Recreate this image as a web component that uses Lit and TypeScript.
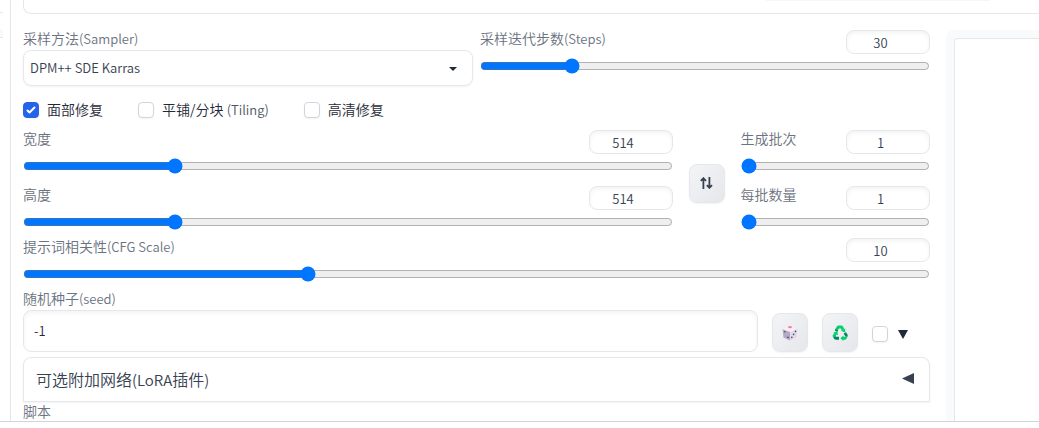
import { LitElement, html, css, svg } from "lit";
import { customElement, property } from "lit/decorators.js";

@customElement("range-field")
class RangeField extends LitElement {
  @property() label = "";
  @property() note = "";
  @property({ type: Number }) value = 0;
  @property({ type: Number }) min = 0;
  @property({ type: Number }) max = 100;

  static styles = css`
    :host { display: block; min-width: 0; }
    .head { display: flex; justify-content: space-between; align-items: flex-start; height: 24px; }
    .label { font-size: 14px; line-height: 16px; color: #6b7280; white-space: nowrap; }
    .note { font-size: 13px; }
    .number {
      box-sizing: border-box; width: 84px; height: 24px; margin: 0; padding: 0 8px;
      border: 1px solid #e5e7eb; border-radius: 8px; background: #fff;
      box-shadow: inset 0 2px 4px rgba(0, 0, 0, 0.05);
      font: inherit; font-size: 13px; text-align: center; color: #374151; outline: none;
    }
    .number::-webkit-inner-spin-button { opacity: 0; }
    .slider { display: block; box-sizing: border-box; width: 100%; height: 16px; margin: 4px 0 0; }
  `;

  private update_(e: Event) {
    this.value = Number((e.target as HTMLInputElement).value);
  }

  render() {
    return html`
      <div class="head">
        <label class="label" for="slider">${this.label}<span class="note">${this.note}</span></label>
        <input class="number" type="number" aria-label=${this.label}
          min=${this.min} max=${this.max} .value=${String(this.value)} @change=${this.update_} />
      </div>
      <input id="slider" class="slider" type="range"
        min=${this.min} max=${this.max} .value=${String(this.value)} @input=${this.update_} />
    `;
  }
}

const dice = svg`
  <path d="M8 1 L15 4 L8 7 L1 4Z" fill="#f5eef8"/>
  <path d="M0.6 4.2 L8 7 V15.6 L1.5 12.6Z" fill="#b4a8c2"/>
  <path d="M15.4 4.2 L8 7 V15.6 L14.5 12.6Z" fill="#e2d8ec"/>
  <ellipse cx="8" cy="2.2" rx="2" ry="1.1" fill="#f8808c"/>
  <g fill="#54406e"><circle cx="2.7" cy="6.8" r="0.8"/><circle cx="6" cy="12.4" r="0.8"/>
  <circle cx="13.5" cy="6.4" r="0.8"/><circle cx="11.6" cy="9.4" r="0.8"/><circle cx="9.8" cy="12.4" r="0.8"/></g>`;

const recycle = svg`
  <path d="M4.6 4.8 L6.2 2 H9.6 L11 4.6" fill="none" stroke="#00d26a" stroke-width="2.8" stroke-linejoin="round"/>
  <path d="M3.4 3.8 L6.2 5.6 L5.2 7 L2.8 5.6Z" fill="#008463"/>
  <path d="M8.8 5.8 L13.2 3.4 V7.6Z" fill="#00d26a"/>
  <path d="M3.6 8.4 L2 11 L3 12.4" fill="none" stroke="#00d26a" stroke-width="2.8" stroke-linejoin="round"/>
  <path d="M1.2 7.6 L5.4 6.6 L6 10.2Z" fill="#00d26a"/>
  <path d="M1.4 12.4 Q2.2 14.8 4 14.8 H7 V11.8 H3Z" fill="#008463"/>
  <path d="M11.6 8.6 L14 7.2 L15.6 9.8 Q16 11 15.2 12 L13.4 11.6Z" fill="#008463"/>
  <path d="M15.2 11.6 Q14.8 14.8 12.6 14.8 H11.4 V15.9 L8.4 13.2 L11.4 10.4 V11.8 H13Z" fill="#00d26a"/>`;

@customElement("app-root")
class AppRoot extends LitElement {
  static styles = css`
    :host {
      display: block; background: #fff; overflow: hidden; font-weight: 350;
      font-family: "Noto Sans CJK SC", "Noto Sans", sans-serif; color: #1f2937;
    }
    .page { display: flex; border-bottom: 1px solid #d4d4d8; }
    .rail { width: 3px; margin-right: 7px; flex: none; }
    .rail-line { height: 12px; border-bottom: 1px solid #e5e7eb; }
    .rail-tab { height: 8px; margin-top: 16px; background: #f9fafb; border-bottom: 1px solid #e5e7eb; }
    .main { flex: 1; min-width: 0; border-left: 1px solid #e5e7eb; padding-left: 12px; }
    .prompt {
      height: 13px; border: 1px solid #e5e7eb; border-width: 0 0 1px 1px;
      border-bottom-left-radius: 8px; display: flex; justify-content: flex-end;
    }
    .prompt-shade { width: 224px; height: 1px; margin-right: 49px; background: #f7f7f8; }
    .body { display: flex; gap: 16px; padding-top: 16px; }
    .settings { flex: 1; min-width: 0; padding-bottom: 2px; }
    .gallery {
      width: 93px; box-sizing: border-box; padding: 8px 0 0 8px; display: flex;
      background: #f9fafb; border-top-left-radius: 8px;
    }
    .canvas { flex: 1; background: #fff; border: 1px solid #e5e7eb; border-width: 1px 0 0 1px; border-top-left-radius: 4px; }
    .label { display: block; height: 16px; font-size: 14px; line-height: 16px; color: #6b7280; }
    .note { font-size: 13px; }
    .top { display: grid; grid-template-columns: 1fr 1fr; gap: 7px; }
    .select-wrap { position: relative; margin-top: 4px; }
    .select {
      appearance: none; display: block; box-sizing: border-box; width: 100%; height: 36px;
      padding: 0 32px 2px 6px; border: 1px solid #e5e7eb; border-radius: 8px; background: #fff;
      box-shadow: 0 1px 2px rgba(0, 0, 0, 0.05);
      font: inherit; font-size: 13px; color: #374151;
    }
    .caret { position: absolute; right: 16px; top: 17px; width: 8px; height: 4px; pointer-events: none; }
    .checks { display: flex; gap: 35px; margin-top: 14px; height: 20px; }
    .check { display: flex; align-items: center; gap: 8px; font-size: 14px; line-height: 20px; white-space: nowrap; }
    .check-text { padding-bottom: 2px; }
    .check .note { color: #4b5563; }
    .box {
      appearance: none; box-sizing: border-box; width: 16px; height: 16px; margin: 0; flex: none;
      border: 1px solid #d1d5db; border-radius: 4px; background: #fff;
      box-shadow: 0 1px 2px rgba(0, 0, 0, 0.05);
    }
    .box:checked {
      border-color: #2563eb;
      background: #2563eb url("data:image/svg+xml,%3Csvg viewBox='0 0 16 16' fill='white' xmlns='http://www.w3.org/2000/svg'%3E%3Cpath d='M12.207 4.793a1 1 0 010 1.414l-5 5a1 1 0 01-1.414 0l-2-2a1 1 0 011.414-1.414L6.5 9.086l4.293-4.293a1 1 0 011.414 0z'/%3E%3C/svg%3E") center / 16px 16px;
    }
    .dims { display: grid; grid-template-columns: 24fr 36px 7fr; gap: 16px; margin-top: 10px; align-items: center; }
    .stack { display: grid; gap: 12px; min-width: 0; }
    .cfg { margin-top: 8px; }
    .tool {
      box-sizing: border-box; width: 36px; height: 39px; padding: 0; flex: none;
      display: flex; align-items: center; justify-content: center;
      border: 1px solid #e5e7eb; border-radius: 8px; color: #374151;
      background: linear-gradient(to bottom right, #f3f4f6, #e5e7eb);
      box-shadow: 0 1px 2px rgba(0, 0, 0, 0.05);
    }
    .swap { margin-top: 6px; }
    .seed-label { margin-top: 8px; }
    .seed-row { display: flex; align-items: flex-end; gap: 14px; margin-top: 4px; }
    .seed {
      flex: 1; min-width: 0; box-sizing: border-box; height: 42px; margin: 0; padding: 0 10px 2px;
      border: 1px solid #e5e7eb; border-radius: 8px; background: #fff; outline: none;
      box-shadow: inset 0 2px 4px rgba(0, 0, 0, 0.05);
      font: inherit; font-size: 13px; color: #1f2937;
    }
    .extra { display: flex; align-items: center; gap: 10px; height: 36px; padding-right: 22px; }
    .accordion {
      box-sizing: border-box; width: 100%; height: 45px; margin: 5px 0 1px; padding: 0 15px 2px 12px;
      display: flex; align-items: center; justify-content: space-between;
      border: 1px solid #e5e7eb; border-radius: 8px 8px 0 0; background: #fff;
      box-shadow: 0 1px 2px rgba(0, 0, 0, 0.05);
      font: inherit; font-size: 16px; color: #374151;
    }
    .latin { font-size: 15px; }
    svg { display: block; }
  `;

  render() {
    return html`
      <div class="page">
        <div class="rail"><div class="rail-line"></div><div class="rail-tab"></div></div>
        <main class="main">
          <div class="prompt"><div class="prompt-shade"></div></div>
          <div class="body">
            <section class="settings">
              <div class="top">
                <div>
                  <label class="label" for="sampler">采样方法<span class="note">(Sampler)</span></label>
                  <div class="select-wrap">
                    <select id="sampler" class="select"><option>DPM++ SDE Karras</option></select>
                    <svg class="caret" viewBox="0 0 8 4"><path d="M0 0H8L4 4Z" fill="#1f2937"/></svg>
                  </div>
                </div>
                <range-field label="采样迭代步数" note="(Steps)" .min=${1} .max=${150} .value=${30}></range-field>
              </div>
              <div class="checks">
                <label class="check"><input class="box" type="checkbox" checked /><span class="check-text">面部修复</span></label>
                <label class="check"><input class="box" type="checkbox" /><span class="check-text">平铺/分块 <span class="note">(Tiling)</span></span></label>
                <label class="check"><input class="box" type="checkbox" /><span class="check-text">高清修复</span></label>
              </div>
              <div class="dims">
                <div class="stack">
                  <range-field label="宽度" .min=${64} .max=${2048} .value=${514}></range-field>
                  <range-field label="高度" .min=${64} .max=${2048} .value=${514}></range-field>
                </div>
                <button class="tool swap" aria-label="⇅">
                  <svg width="13" height="12" viewBox="0 0 13 12" fill="none" stroke="currentColor" stroke-width="1.8">
                    <path d="M3.4 12V1.6M0.8 3.8L3.4 1.2L6 3.8M9.4 0V10.4M6.8 8.2L9.4 10.8L12 8.2"/>
                  </svg>
                </button>
                <div class="stack">
                  <range-field label="生成批次" .min=${1} .max=${100} .value=${1}></range-field>
                  <range-field label="每批数量" .min=${1} .max=${8} .value=${1}></range-field>
                </div>
              </div>
              <range-field class="cfg" label="提示词相关性" note="(CFG Scale)" .min=${1} .max=${30} .value=${10}></range-field>
              <label class="label seed-label" for="seed">随机种子<span class="note">(seed)</span></label>
              <div class="seed-row">
                <input id="seed" class="seed" type="text" value="-1" />
                <button class="tool" aria-label="🎲"><svg width="16" height="16" viewBox="0 0 16 16">${dice}</svg></button>
                <button class="tool" aria-label="♻"><svg width="16" height="16" viewBox="0 0 16 16">${recycle}</svg></button>
                <label class="extra">
                  <input class="box" type="checkbox" aria-label="▼" />
                  <svg width="10" height="9" viewBox="0 0 10 9"><path d="M0 0H10L5 9Z" fill="#1f2937"/></svg>
                </label>
              </div>
              <button class="accordion">
                <span>可选附加网络<span class="latin">(LoRA</span>插件<span class="latin">)</span></span>
                <svg width="12" height="11" viewBox="0 0 12 11"><path d="M12 0V11L0 5.5Z" fill="#374151"/></svg>
              </button>
              <span class="label">脚本</span>
            </section>
            <aside class="gallery"><div class="canvas"></div></aside>
          </div>
        </main>
      </div>
    `;
  }
}
